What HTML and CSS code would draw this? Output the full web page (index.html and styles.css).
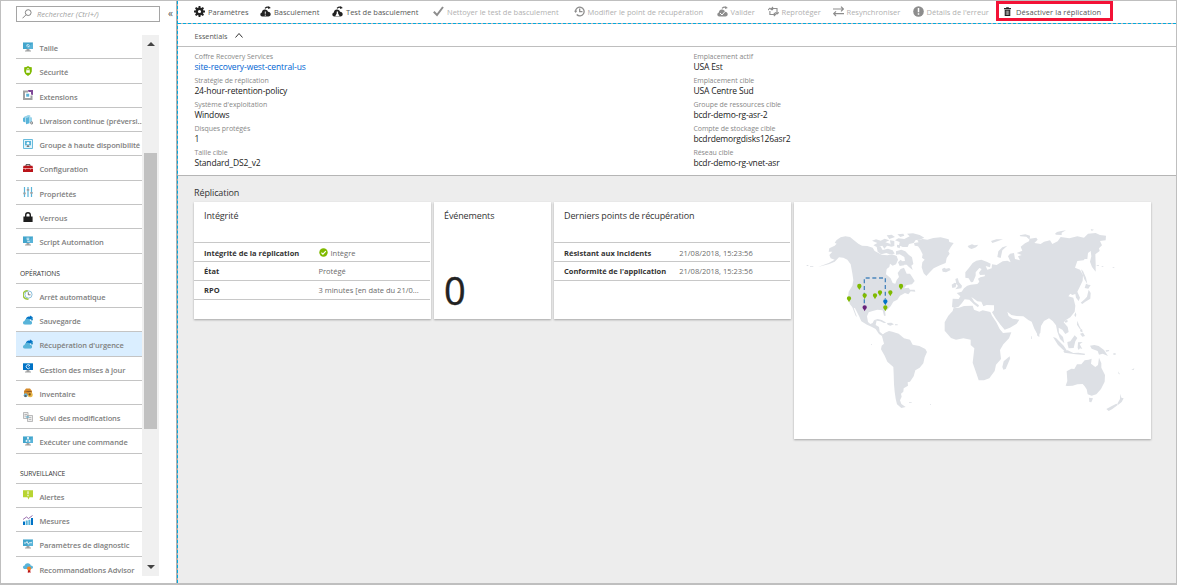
FILE: index.html
```
<!DOCTYPE html>
<html lang="fr">
<head>
<meta charset="utf-8">
<title>Récupération d'urgence</title>
<link rel="stylesheet" href="styles.css">
</head>
<body>
<svg class="defs" aria-hidden="true">
  <symbol id="monitor" viewBox="0 0 10 10"><path fill="#59b4d9" d="M0 .5h10v6.500H0z"/><path fill="#0078a8" opacity=".25" d="M0 .5h10L4 7H0z"/><path fill="#a0a1a2" d="M3.700 7h2.600l.4 1.500H8V9.500H2v-1h1.300z"/></symbol>
  <symbol id="cloud" viewBox="0 0 11 11"><path d="M2.200 10.500A2.200 2.200 0 0 1 .3 8.400c0-1 .7-1.800 1.600-2C2.200 4.300 3.500 3.400 5.100 3.600c1.500.1 2.500 1 2.900 2.200 1.600 0 2.700 1 2.700 2.500 0 1.300-.9 2.200-2.200 2.200z"/><path fill="none" stroke="currentColor" stroke-width="1.200" d="M5 2.400C6.500 1 8 1 9.200 1.600"/><path d="M8.500 0l2.300 1.900L8 3z"/></symbol>
  <symbol id="clouds" viewBox="0 0 11 10"><path fill="#0072c6" d="M3 4C3.500 1.500 6 .8 7.500 1.700L7.200.1 10.300 2 8.900 5.500 8.300 4.200 5 5z"/><path fill="#3999c6" d="M9 2.500c1 .4 1.500 1.300 1.500 2.500L9 6z"/><path fill="#59b4d9" d="M2 10C.8 10 0 9.200 0 8c0-1.100.7-1.800 1.600-1.900C2 4.300 3.200 3.300 4.700 3.400c1.500.1 2.500 1.100 2.700 2.300C8.700 5.700 9.500 6.600 9.500 7.800 9.500 9.200 8.600 10 7.500 10z"/></symbol>
</svg>

<div class="window">
  <aside class="sidebar">
    <div class="search-row">
      <div class="search"><svg viewBox="0 0 10 10"><g fill="none" stroke="#777" stroke-width=".9"><circle cx="6.200" cy="3.600" r="2.900"/><path d="M4 5.800.5 9.300"/></g></svg><span>Rechercher (Ctrl+/)</span></div>
      <span class="collapse">«</span>
    </div>
    <div class="scroller">
      <nav class="menu">
        <a class="item"><svg viewBox="0 0 10 10"><use href="#monitor"/><circle cx="5" cy="3.700" r="1.700" fill="#c5e6f3"/><path d="M4 4.700 6 2.700" stroke="#3999c6"/></svg><span>Taille</span></a>
        <a class="item"><svg viewBox="0 0 10 10"><path fill="#7fba00" d="M1.200 1.200Q3.500 1.200 5 0q1.500 1.200 3.800 1.200V5.500Q8.500 8.200 5 10 1.500 8.200 1.200 5.500z"/><path fill="#fff" d="M3.200 4.200h3.600v2.600H3.200z"/><path fill="none" stroke="#fff" stroke-width=".7" d="M4 4.400V3.300a1 1 0 0 1 2 0v1.100"/></svg><span>Sécurité</span></a>
        <a class="item"><svg viewBox="0 0 10 10"><path fill="none" stroke="#a0a1a2" stroke-width="2" d="M5 1.600H1v7.400h7.500V5.500"/><path fill="#59b4d9" d="M3.200 3.700h3v3h-3z"/><path fill="#804998" d="M5 0h5v5L8 4.500V2H5.500z"/></svg><span>Extensions</span></a>
        <a class="item"><svg viewBox="0 0 10 10"><path fill="#59b4d9" d="M0 3.200 2.500 1v6.500L0 6.500zM3 1.800 6.500.2v8L3 9.200z"/><path fill="#98d3ea" d="M.5 2.500 5 0l3 1-4 2zM6.500 2l2.500.5v4l-2.500 1z"/><circle cx="8.700" cy="7.900" r="1.100" fill="none" stroke="#6d7073" stroke-width=".9"/></svg><span>Livraison continue (préversi...</span></a>
        <a class="item"><svg viewBox="0 0 10 10"><path fill="#e4f4fa" stroke="#59b4d9" stroke-width=".9" d="M.5.500h9v9h-9z"/><path fill="#59b4d9" d="M2 2h6v4.300H2z"/><circle cx="5" cy="4.200" r="1.300" fill="#fff"/><path fill="#7a7a7a" d="M4.300 6.300h1.400L6.500 8h-3z"/></svg><span>Groupe à haute disponibilité</span></a>
        <a class="item"><svg viewBox="0 0 10 10"><path fill="none" stroke="#3e3e3e" d="M3 3V1.700h4V3"/><path fill="#ba141a" d="M.5 2.800h9L10 5H0zM0 5.600h10V9H0z"/><path fill="#f4a8a8" d="M2 5h1v1.500H2zM7 5h1v1.500H7zM0 5h10v.5H0z"/></svg><span>Configuration</span></a>
        <a class="item"><svg viewBox="0 0 10 10"><path stroke="#59b4d9" stroke-width="1.200" d="M1.500 0v10M5 0v10M8.500 0v10"/><path fill="#a0a1a2" d="M.3 5.500h2.400v1.700H.3zM3.800 2h2.400v1.700H3.800zM7.300 5h2.400v1.700H7.300z"/></svg><span>Propriétés</span></a>
        <a class="item"><svg viewBox="0 0 10 10"><path fill="none" stroke="#1e1e1e" stroke-width="1.400" d="M2.700 5V3a2.300 2.300 0 0 1 4.600 0v2"/><path fill="#1e1e1e" d="M.4 4.500h9.200V10H.4z"/></svg><span>Verrous</span></a>
        <a class="item"><svg viewBox="0 0 10 10"><use href="#monitor"/><path fill="none" stroke="#fff" stroke-width=".8" d="M3.500 2.200h2.800M4.200 5.300h2.600M3.700 3.700h2.500"/></svg><span>Script Automation</span></a>
        <h2 class="group">OPÉRATIONS</h2>
        <a class="item"><svg viewBox="0 0 10 10"><circle cx="5.500" cy="4.500" r="3.600" fill="#fff" stroke="#7fb8d6" stroke-width=".9"/><path fill="none" stroke="#9bc53d" stroke-width="1.500" d="M4.700.8A4 4 0 0 0 3.800 9l1.700.2"/><path fill="none" stroke="#555" stroke-width=".8" d="M5.300 2.200v2.600H7.500"/></svg><span>Arrêt automatique</span></a>
        <a class="item"><svg viewBox="0 0 10.500 10"><use href="#clouds" width="11" height="10"/></svg><span>Sauvegarde</span></a>
        <a class="item selected"><svg viewBox="0 0 10.500 10"><use href="#clouds" width="11" height="10"/></svg><span>Récupération d'urgence</span></a>
        <a class="item"><svg viewBox="0 0 10 10"><use href="#monitor"/><path fill="#0072c6" d="M0 .5h10v6.500H0z"/><path fill="none" stroke="#fff" stroke-width=".8" d="M6.800 2.400A2 2 0 1 0 7 4.500M5 3.500l2-1.500"/></svg><span>Gestion des mises à jour</span></a>
        <a class="item"><svg viewBox="0 0 10 10"><path fill="#d68b2b" d="M1 3 3 .5h4L9 3v4H1z"/><path fill="#8b572a" d="M1 3h8L7 4.500z"/><circle cx="2.700" cy="7.200" r="2" fill="#69b5d8"/><circle cx="7.200" cy="6.700" r="2.500" fill="#e6b64a"/><path fill="#805113" d="M5 6 7 5l1 1-1 2z"/><path fill="#646464" d="M1.500 7h2v2h-2z"/></svg><span>Inventaire</span></a>
        <a class="item"><svg viewBox="0 0 10 10"><g fill="#eee" stroke="#a0a1a2" stroke-width=".7"><path d="M.5.500h4.500v6H.5zM4.500 3.500h5v6h-5z"/><path d="M1.500 2.500h2.500M1.500 4.200h2M5.800 5.500h2.500M5.800 7.500h2.500"/></g><path stroke="#59b4d9" d="M3 5h3"/></svg><span>Suivi des modifications</span></a>
        <a class="item"><svg viewBox="0 0 10 10"><use href="#monitor"/><path fill="#fff" d="M4.200 1h1.600v1.700H4.200zM2.700 4.300h1.600v1.500H2.700zM5.700 4.300h1.600v1.500H5.700z"/><path stroke="#fff" stroke-width=".5" d="M5 2 3.500 5M5 2l1.500 3"/></svg><span>Exécuter une commande</span></a>
        <h2 class="group">SURVEILLANCE</h2>
        <a class="item"><svg viewBox="0 0 10 10"><path fill="#b8d432" d="M0 .3h10v7H6.500L5.500 9.500 4.500 7.300H0z"/><path stroke="#fff" stroke-width="1.100" d="M5 1.300v3M5 5v1.200"/></svg><span>Alertes</span></a>
        <a class="item"><svg viewBox="0 0 10 10"><path fill="#0072c6" d="M0 6.500h2V10H0zM8 3h2v7H8z"/><path fill="#59b4d9" d="M2.700 5.500h2V10h-2zM5.400 4.800h2V10h-2z"/><path fill="none" stroke="#804998" stroke-width=".8" d="M0 4.500 3.500 2l2 1.500L9.500.5"/></svg><span>Mesures</span></a>
        <a class="item"><svg viewBox="0 0 10 10"><use href="#monitor"/><path fill="none" stroke="#fff" stroke-width=".8" d="M1 4h2l1-1.500L5.300 5.300 6.300 3.700H9"/></svg><span>Paramètres de diagnostic</span></a>
        <a class="item"><svg viewBox="0 0 10 10"><path fill="#59b4d9" d="M2 6C.7 6 0 5.200 0 4.200c0-1 .8-1.700 1.700-1.800C2.200.8 3.500 0 5 .2c1.500.1 2.500 1 2.700 2.200C9.200 2.400 10 3.200 10 4.300 10 5.500 9 6 8 6z"/><path fill="#ba141a" d="m5 6-.2 4 1.400-.8 1.300.8L7.200 6z"/><circle cx="6" cy="5.500" r="2" fill="#f58220"/></svg><span>Recommandations Advisor</span></a>
      </nav>
      <div class="scrollbar"><i class="up"></i><i class="thumb"></i><i class="down"></i></div>
    </div>
  </aside>

  <main class="content">
    <div class="toolbar">
      <span class="tool"><svg viewBox="0 0 11 11"><circle cx="5.500" cy="5.500" r="2.800" fill="none" stroke="currentColor" stroke-width="2.400"/><path stroke="currentColor" stroke-width="1.900" d="M5.500 0v2M5.500 9v2M0 5.500h2M9 5.500h2M1.600 1.600 3 3M8 8l1.400 1.400M1.600 9.400 3 8M8 3l1.400-1.400"/></svg>Paramètres</span>
      <span class="tool"><svg viewBox="0 0 11 11"><use href="#cloud"/><path stroke="#fff" stroke-width=".9" d="M5.300 5.500v2.300M5.300 8.600v1.200"/></svg>Basculement</span>
      <span class="tool"><svg viewBox="0 0 11 11"><use href="#cloud"/><path fill="#fff" d="M4.700 5.500h1.400v2L7.700 10.300H3.200L4.700 7.500z"/></svg>Test de basculement</span>
      <span class="tool off"><svg viewBox="0 0 11 11"><path fill="none" stroke="currentColor" stroke-width="2" d="M.8 5.800 4 9l6-8"/></svg>Nettoyer le test de basculement</span>
      <span class="tool off"><svg viewBox="0 0 11 11"><path fill="none" stroke="currentColor" stroke-width="1.300" d="M1.500 5.500A4.300 4.300 0 1 1 2.700 8.500M5.700 2.500v3.200h2.800"/><path d="M0 4.800h3.300L1.700 7z"/></svg>Modifier le point de récupération</span>
      <span class="tool off"><svg viewBox="0 0 11 11"><use href="#cloud"/><path fill="none" stroke="#fff" d="m3 7 2 2 3-3.500"/></svg>Valider</span>
      <span class="tool off"><svg viewBox="0 0 11 11"><path fill="none" stroke="currentColor" stroke-width="1.100" d="M1.900 5V8.500H7.500M0 4 1.900 2.200 3.800 4M3.800 2.500H9V7M7.200 6.300 9 8 10.900 6.300M5.800 6.900 7.500 8.500 5.800 10.200M5 1 3.600 2.500 5 4"/></svg>Reprotéger</span>
      <span class="tool off"><svg viewBox="0 0 11 11"><path fill="none" stroke="currentColor" stroke-width="1.200" d="M0 3h10M8 .6 10.300 3 8 5.400M11 7.700H1M3 5.400.7 7.700 3 10"/></svg>Resynchroniser</span>
      <span class="tool off"><svg viewBox="0 0 11 11"><circle cx="5.500" cy="5.500" r="5.300"/><path stroke="#fff" stroke-width="1.500" d="M5.500 2v4.300M5.500 7.300v1.500"/></svg>Détails de l'erreur</span>
      <span class="tool framed"><svg viewBox="0 0 8 10"><path d="M2.500 0h3v1H8v1.300H0V1h2.500zM.8 3h6.400v7H.8z"/><path stroke="#fff" stroke-width=".6" d="M2.600 4v5M4 4v5M5.400 4v5"/></svg>Désactiver la réplication</span>
    </div>
    <div class="essentials-bar"><span>Essentials</span><svg viewBox="0 0 8 5"><path fill="none" stroke="#333" d="m.5 4.500 3.500-4 3.500 4"/></svg></div>
    <section class="essentials">
      <dl>
        <dt>Coffre Recovery Services</dt><dd class="link">site-recovery-west-central-us</dd>
        <dt>Stratégie de réplication</dt><dd>24-hour-retention-policy</dd>
        <dt>Système d'exploitation</dt><dd>Windows</dd>
        <dt>Disques protégés</dt><dd>1</dd>
        <dt>Taille cible</dt><dd>Standard_DS2_v2</dd>
      </dl>
      <dl>
        <dt>Emplacement actif</dt><dd>USA Est</dd>
        <dt>Emplacement cible</dt><dd>USA Centre Sud</dd>
        <dt>Groupe de ressources cible</dt><dd>bcdr-demo-rg-asr-2</dd>
        <dt>Compte de stockage cible</dt><dd>bcdrdemorgdisks126asr2</dd>
        <dt>Réseau cible</dt><dd>bcdr-demo-rg-vnet-asr</dd>
      </dl>
    </section>
    <section class="replication">
      <h1>Réplication</h1>
      <div class="cards">
        <article class="card">
          <h3>Intégrité</h3>
          <div class="row first"><b>Intégrité de la réplication</b><span><svg viewBox="0 0 9 9"><circle cx="4.500" cy="4.500" r="4.200" fill="#7fba00"/><path fill="none" stroke="#fff" stroke-width="1.200" d="m2.400 4.600 1.500 1.500 2.900-3"/></svg>Intègre</span></div>
          <div class="row"><b>État</b><span>Protégé</span></div>
          <div class="row last"><b>RPO</b><span>3 minutes [en date du 21/0...</span></div>
        </article>
        <article class="card events"><h3>Événements</h3><strong>0</strong></article>
        <article class="card points">
          <h3>Derniers points de récupération</h3>
          <div class="row first"><b>Résistant aux incidents</b><span>21/08/2018, 15:23:56</span></div>
          <div class="row last"><b>Conformité de l'application</b><span>21/08/2018, 15:23:56</span></div>
        </article>
        <article class="card map">
          <svg viewBox="12 21 1071 711">
            <g class="land">
              <path d="M118 160 134 152 140 146 134 143 140 135 152 127 166 124 180 126 190 134 205 146 216 152 232 153 248 158 254 168 264 173 275 179 292 181 306 178 320 183 324 194 318 208 308 212 300 206 298 216 290 222 288 238 302 250 308 264 316 266 320 255 327 246 323 234 332 222 342 218 350 236 360 236 368 248 374 258 366 268 350 270 342 280 356 278 360 284 374 284 376 290 362 289 355 298 345 294 330 302 322 314 310 320 302 334 292 344 285 348 287 362 282 362 278 346 262 344 248 348 236 352 231 364 234 381 241 387 248 384 252 376 260 376 257 390 267 396 269 410 278 418 286 414 287 420 276 423 267 417 257 402 246 396 231 389 214 379 207 363 195 340 191 338 201 366 197 362 187 337 179 326 174 308 176 290 187 272 190 256 187 235 182 208 172 194 160 188 147 187 134 200 118 207 84 216 116 204 134 194 122 190 118 180 127 170 116 170z"/>
              <path d="m246 137 12-4 14 4 12-6 14 5-12 6 14 4 6 9-15-3-8 9-6-9-15 5-12-6 12-7zM260 155l12 0 6 10 16-4 14 5 6 10-15 2-10-4-16 4-10-8zM290 121l15-2 10 7-17 6zM315 136l10-6 18 2 16-8-8-8 18-1 20 5 14 8-14 6-12 1-6 9-14 3-4 9-15 0-11-5 2-10zM322 118l18-2 3 6-12 4zM300 136l13 2 0 15-10 2zM321 149l10 2-2 9-8-3zM318 169l16-5 12 5 10 10 10 8 4 20-6 5 4 13-11-9-7-7-12-2-5-8 12-1-2-12-14-8-11 1zM324 202l8-8 8 8 3 9-14 2z"/>
              <path d="M372 144 386 142 382 136 398 132 412 134 430 129 452 127 476 133 478 141 491 144 482 157 475 169 479 176 470 189 467 204 450 211 431 220 420 231 409 243 401 235 395 217 397 202 404 194 396 188 398 178 390 162 384 154 374 152z"/>
              <path d="m456 222 7-4 5 3 10-2 4 6-14 7-10-2zM533 153l13-5 8 3 11-2-7 8-13 5-8-3zM251 376l12-4 12 3 14 8-7 1-11-5zM291 384l13-1 8 5-11 4-8-3zM315 388h8v3h-8zM357 622h8v2h-8zM420 627h3v2h-3zM243 447h3v2h-3zM50 210h5v3h-5zM60 214h10v2H60z"/>
              <path d="M276 424 285 413 297 408 307 410 326 416 342 430 360 434 368 449 388 453 406 462 411 471 404 487 400 505 389 518 376 526 371 544 360 560 353 562 354 572 341 580 340 590 333 596 335 605 330 616 334 627 347 636 334 639 321 628 317 611 314 590 312 568 311 536 310 516 292 500 284 482 273 463 275 452 282 446z"/>
              <path d="M490 340 507 338 522 333 548 332 552 344 568 350 578 346 601 351 606 362 619 382 629 402 639 414 664 412 657 430 640 448 630 465 633 492 618 509 614 528 598 550 582 556 566 556 560 538 548 503 550 486 553 460 542 450 542 434 520 430 498 434 483 429 464 407 464 382 475 362 488 348z"/>
              <path d="m637 516 4-17 18-15 1 7-13 31-7 2zM487 279l-2-10 9-6 5 2-2 12zM496 252l7-3 4 13 9 10-2 8-18 3 8-10-5-6z"/>
              <g transform="translate(540)">
                <path d="M-54 336-52 311-34 312-29 304-40 294-25 290-18 280-8 272 2 269 22 267 28 260 24 251 31 247 44 244 45 239 30 240 27 233 35 222 28 219 17 232 17 242 9 261 3 262-4 250-14 248-14 232-4 220 8 204 19 197 34 194 50 200 62 206 60 217 47 213 52 224 65 220 66 208 80 210 98 199 112 197 122 202 114 184 120 176 132 174 135 192 150 196 144 184 155 180 140 174 157 167 152 155 165 145 177 139 179 131 199 128 203 134 193 144 212 147 222 140 240 136 247 147 263 139 272 126 298 130 322 124 342 128 354 116 377 114 390 120 408 122 407 136 390 138 396 151 387 160 389 168 376 178 377 206 377 230 366 216 360 200 364 184 362 168 354 174 352 192 344 192 341 196 322 198 315 218 330 224 339 240 338 257 328 278 322 290 330 308 326 318 318 308 316 297 307 300 301 296 295 304 310 308 316 332 314 350 301 367 289 374 281 382 293 396 296 411 286 417 277 404 266 398 267 414 279 426 283 445 270 432 262 410 258 391 248 378 237 370 222 378 213 393 211 414 204 421 193 401 185 380 176 376 160 364 140 363 124 360 112 350 116 363 128 371 148 374 140 386 120 398 104 404 92 390 78 371 66 352 72 346 72 331 50 330 40 334 34 320 22 319 14 313 4 306 13 320 27 331 24 337 12 328-2 314-16 313-24 324-34 335-46 339z"/>
                <path d="m82 186 3-17 12-12 15-5-15 14-5 23zM63 138l16-5 20 0-17 6-15 5zM149 121l17-3 14 4-1 12-10-9-18-1zM255 116l6-5 13-3 14-2-13 7 0 7-17-1zM362 102l10 2-7 4zM333 223l6 5 9 20 4 19-9-14zM348 266l7 3 7 1-7 11-11-2zM356 284l6 10-1 17-15 9-9 7-5-4 12-10 7-8zM317 352l2 8-3 7-3-7zM284 378l8-4 1 7-7 2zM322 377l5 14 7 13-4-1-9-14zM330 405l6-3 2 10-6-2zM330 416l9-3 6 10-8 2zM293 449l-1-8 9-2 13-18 8 8-6 10-5 20-15 1zM249 426l9 3 23 23 9 14-7 2-19-18zM280 468l13-2 17 8 15-1 20 3-1 4-27-2-34-5zM324 442l14-1-9 7 8 14-7-2-4 5-3-6zM360 452l13-2 13 3 16 12 12 18-16-7-11 3-4-11-18-7zM407 466l11-1-2 4-8 1zM430 475h7v4h-7zM484 524l9-4-2 5zM444 529l6 9-4-1zM200 410l8 7 0 9-6-4zM380 211h7v2h-7zM395 213h5v2h-5zM428 216h5v2h-5zM184 424h2v8h-2z"/>
                <path d="M293 573 287 572 292 558 290 529 304 521 313 522 321 508 334 508 344 496 356 494 365 491 363 506 376 516 384 510 387 488 394 505 394 518 405 540 404 560 393 582 379 598 365 602 353 598 350 583 344 574 338 567 322 568 308 572z"/>
                <path d="m357 608 12 2-5 12-6-1zM451 596l3 12 7 2-6 11-10 8-3-3 8-14zM439 626l5 3-18 14-10 5-7-6 18-10z"/>
              </g>
            </g>
            <path class="route" d="M223 325V249H286V312"/>
            <g fill="#7fba00"><use href="#pin" x="177" y="312"/><use href="#pin" x="208" y="275"/><use href="#pin" x="224" y="303"/><use href="#pin" x="255" y="303"/><use href="#pin" x="270" y="294"/><use href="#pin" x="301" y="294"/><use href="#pin" x="333" y="275"/><use href="#pin" x="286" y="339"/></g>
            <use href="#pin" x="286" y="321" fill="#0072c6"/><use href="#pin" x="224" y="339" fill="#68217a"/>
            <defs><path id="pin" d="M0 10C-2 5-6.500 2-6.500-2A6.500 6.500 0 0 1 6.500-2C6.500 2 2 5 0 10z"/></defs>
          </svg>
        </article>
      </div>
    </section>
  </main>
</div>
</body>
</html>
```
FILE: styles.css
```
* { box-sizing: border-box; }
body { margin: 0; font-family: "Open Sans", "Noto Sans", sans-serif; color: #333; }
h1, h2, h3, dl, dd { margin: 0; font-weight: 400; }
svg { display: block; flex: none; }
.defs { display: none; }
.window { width: 1177px; height: 585px; display: flex; border: 1px solid #bfbfbf; border-bottom-width: 2px; background: #fff; overflow: hidden; }

.sidebar { width: 176px; flex: none; border-right: 1px solid #b0b0b0; display: flex; flex-direction: column; }
.search-row { display: flex; padding: 5px 0 0 15px; height: 34px; gap: 8px; }
.search { width: 144px; height: 16px; border: 1px solid #a5a5a5; display: flex; align-items: center; gap: 5px; padding-left: 5px; font-size: 7.500px; font-style: italic; color: #a0a0a0; }
.search svg { width: 10px; height: 10px; }
.collapse { font-size: 10px; line-height: 15px; color: #555; }
.scroller { display: flex; height: 541px; margin-left: 15px; overflow: hidden; }
.menu { width: 127px; flex: none; }
.item { display: flex; align-items: center; height: 24.300px; padding: 2.600px 0 0 7px; gap: 6.400px; border-bottom: 1px solid #c4c4c4; font-size: 7.500px; font-weight: 600; color: #808080; white-space: nowrap; }
.item svg { width: 10px; height: 10px; margin-top: -2.600px; }
.item.selected { background: #daeeff; }
.item span { letter-spacing: -.09px; }
.group { height: 30px; padding: 15px 0 0 4px; border-bottom: 1px solid #c4c4c4; font-size: 6.700px; line-height: 10px; letter-spacing: -.1px; color: #333; }
.scrollbar { width: 17px; margin-left: -1px; background: #f0f0f0; display: flex; flex-direction: column; align-items: center; }
.up, .down { border: 4px solid transparent; }
.up { border-bottom-color: #444; border-top: 0; margin-top: 7px; }
.down { border-top-color: #444; border-bottom: 0; margin-top: 136px; }
.thumb { width: 13px; height: 276px; margin-top: 107px; background: #c1c1c1; }

.content { flex: 1; min-width: 0; border-left: 1px dashed #00aadf; background: linear-gradient(#ededed, #ededed) padding-box, #b5aaa6 border-box; }
.toolbar { height: 23px; display: grid; grid-template-columns: 66px 72px 101px 140.500px 143px 51px 65px 80px 83.500px 117px; padding-left: 16px; background: linear-gradient(#fff, #fff) padding-box, #c5b5b0 border-box; border-bottom: 1px dashed #00aadf; align-items: start; }
.tool { display: flex; align-items: center; height: 22px; gap: 3px; font-size: 7.500px; color: #555; fill: #222; white-space: nowrap; }
.tool svg { width: 11px; height: 11px; margin-top: -1px; color: #222; }
.tool.off { color: #b0b0b0; fill: #8d8d8d; }
.tool.off svg { color: #8d8d8d; }
.tool.framed { height: 20px; border: 3px solid #f31236; padding: 2px 0 0 5px; gap: 5px; letter-spacing: .06px; }
.framed svg { width: 7px; height: 9px; margin-top: -2px; }
.essentials-bar { height: 23px; display: flex; align-items: center; gap: 8px; padding: 1px 0 0 16.500px; background: #fff; border-bottom: 1px solid #bebebe; font-size: 7.200px; color: #555; }
.essentials-bar svg { width: 8px; height: 5px; margin-top: -1px; }
.essentials { height: 129px; display: grid; grid-template-columns: 499px 1fr; padding: 5px 0 0 16.400px; background: #fff; border-bottom: 1px solid #b5b5b5; }
dt { height: 10px; line-height: 10px; font-size: 7px; letter-spacing: -.05px; color: #888; }
dd { height: 14px; line-height: 10px; font-size: 8.500px; color: #222; letter-spacing: -.16px; }
dd.link { color: #0064d2; letter-spacing: -.1px; }

.replication { padding: 10px 0 0 16px; }
h1 { height: 16px; line-height: 14px; font-size: 9px; letter-spacing: -.1px; }
.cards { display: grid; grid-template-columns: 237px 117px 237px 357px; gap: 3px; align-items: start; }
.card { height: 117px; background: #fff; box-shadow: 0 1px 2px rgba(0,0,0,.3); }
.card h3 { height: 40px; padding: 7px 0 0 10px; font-size: 9px; line-height: 13px; letter-spacing: -.12px; }
.row { display: flex; align-items: center; height: 19px; margin-right: 1px; padding-left: 10px; border-top: 1px solid #c8c8c8; font-size: 7.500px; }
.row.first { padding-top: 2px; }
.row.last { height: 20px; border-bottom: 1px solid #c8c8c8; }
.row b { width: 114.500px; font-weight: 700; color: #333; }
.points .row b { width: 115.300px; }
.row span { display: flex; align-items: center; gap: 3px; color: #6b6b6b; }
.row svg { width: 9px; height: 9px; margin-top: -2px; }
.events strong { display: block; padding-left: 10px; font-size: 38px; line-height: 96px; font-weight: 500; color: #222; -webkit-text-stroke: .4px #222; }
.card.map { height: 237px; }
.map svg { width: 357px; height: 237px; }
.land { fill: #dde0e5; }
.route { fill: none; stroke: #4b86bd; stroke-width: 4; stroke-dasharray: 12 8; }
```
